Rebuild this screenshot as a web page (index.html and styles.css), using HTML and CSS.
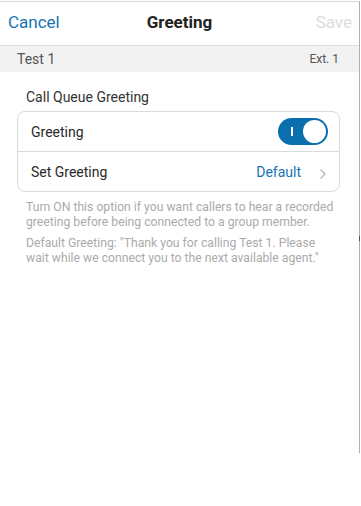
FILE: index.html
```html
<!DOCTYPE html>
<html>
<head>
<meta charset="utf-8">
<link rel="stylesheet" href="styles.css">
</head>
<body>
<div class="frame">
  <header class="nav">
    <span class="nav-btn cancel">Cancel</span>
    <span class="nav-title">Greeting</span>
    <span class="nav-btn save">Save</span>
  </header>
  <div class="subbar">
    <span class="sub-name">Test 1</span>
    <span class="sub-ext">Ext. 1</span>
  </div>
  <main class="content">
    <div class="section-title">Call Queue Greeting</div>
    <div class="card">
      <div class="row">
        <span class="row-label">Greeting</span>
        <span class="toggle"><span class="toggle-bar"></span><span class="knob"></span></span>
      </div>
      <div class="row">
        <span class="row-label">Set Greeting</span>
        <span class="row-right">
          <span class="row-value">Default</span>
          <svg class="chev" width="8" height="12" viewBox="0 0 8 12"><path d="M1.5 1.5 L6 6 L1.5 10.5" fill="none" stroke="#bdbdbd" stroke-width="1.5"/></svg>
        </span>
      </div>
    </div>
    <p class="help">Turn ON this option if you want callers to hear a recorded greeting before being connected to a group member.</p>
    <p class="help">Default Greeting: "Thank you for calling Test 1. Please wait while we connect you to the next available agent."</p>
  </main>
</div>
</body>
</html>
```
FILE: styles.css
```css
html, body {
  margin: 0;
  padding: 0;
  background: #fff;
}
body {
  font-family: Roboto, "Noto Sans", Arial, sans-serif;
  width: 361px;
  height: 506px;
  overflow: hidden;
}
.frame {
  width: 360px;
  height: 452px;
  border-top: 1px solid #d6d6d6;
  border-right: 1px solid #a9b0b8;
  margin-top: 1px;
  box-sizing: border-box;
  position: relative;
}
.frame::after {
  content: "";
  position: absolute;
  right: -1px;
  top: 234px;
  width: 1px;
  height: 5px;
  background: #555;
}
.nav {
  height: 44px;
  display: flex;
  align-items: center;
  justify-content: space-between;
  padding: 0 7px 3px 8px;
  box-sizing: border-box;
  border-bottom: 1px solid #dcdcdc;
  position: relative;
}
.nav-btn {
  font-size: 17px;
}
.cancel { color: #1773b4; }
.save { color: #dcdcdc; }
.nav-title {
  position: absolute;
  left: 0;
  right: 0;
  text-align: center;
  font-size: 17px;
  font-weight: bold;
  color: #222;
  pointer-events: none;
}
.subbar {
  height: 26px;
  background: #f2f2f2;
  display: flex;
  align-items: center;
  justify-content: space-between;
  padding: 0 20px 0 17px;
}
.sub-name {
  font-size: 14px;
  color: #555;
}
.sub-ext {
  font-size: 12px;
  color: #555;
}
.content {
  padding: 17px 19px 0 17px;
}
.section-title {
  font-size: 14px;
  color: #333;
  padding-left: 9px;
  margin-bottom: 6px;
}
.card {
  border: 1px solid #dadada;
  border-radius: 8px;
}
.row {
  height: 39px;
  display: flex;
  align-items: center;
  justify-content: space-between;
  padding: 0 11px 0 13px;
}
.row + .row {
  border-top: 1px solid #dadada;
}
.row-label {
  font-size: 14px;
  color: #2a2a2a;
}
.toggle {
  width: 50px;
  height: 27px;
  border-radius: 14px;
  background: #0a6fac;
  position: relative;
  box-sizing: border-box;
}
.toggle-bar {
  position: absolute;
  left: 13px;
  top: 9px;
  width: 1.5px;
  height: 9px;
  background: #fff;
}
.knob {
  position: absolute;
  right: 2px;
  top: 2px;
  width: 23px;
  height: 23px;
  border-radius: 50%;
  background: #fff;
}
.row-right {
  display: flex;
  align-items: center;
  gap: 18px;
  padding-right: 1px;
}
.row-value {
  font-size: 14px;
  color: #1773b4;
}
.chev {
  margin-top: 4px;
}
.help {
  margin: 8px 0 0 9px;
  width: 308px;
  font-size: 12.2px;
  line-height: 15px;
  color: #ababab;
}
.help + .help {
  margin-top: 6px;
}
```
